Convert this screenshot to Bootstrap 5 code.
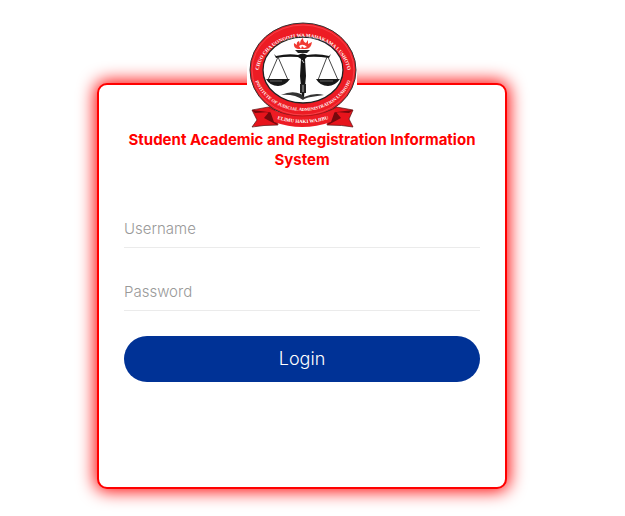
<!DOCTYPE html>
<html lang="en">
<head>
<meta charset="utf-8">
<meta name="viewport" content="width=device-width, initial-scale=1">
<title>Student Academic and Registration Information System</title>
<link href="https://cdn.jsdelivr.net/npm/bootstrap@5.3.0/dist/css/bootstrap.min.css" rel="stylesheet">
<style>
body { font-family: Inter, "Open Sans", sans-serif; background: #fff; }
.login-page { padding: 83px 118px 27px 97px; }
.login-card { border: 2px solid red; border-radius: 10px; box-shadow: 0 0 17px 2px red; padding: 0 25px 105px; }
.crest { width: 110px; height: 108px; margin-top: -64px; background: #fff; }
.crest text { font-family: "Liberation Serif", serif; font-weight: bold; fill: #fff; }
.system-title { color: red; font-size: 15px; line-height: 20px; font-weight: 700; margin: 1px 0 40px; }
.line-input { font-size: 15px; line-height: 21px; font-weight: 300; border: 0; border-bottom: 1px solid #ebebeb; border-radius: 0; padding: 8px 0; background: transparent; }
.line-input::placeholder { color: #999; }
.line-input:focus { box-shadow: none; border-color: #003399; }
.field-gap { margin-top: 25px; }
.login-btn { background: #003296; color: #fff; font-size: 18px; line-height: 26px; font-weight: 300; padding: 10px; border: 0; }
.login-btn:hover { background: #002878; color: #fff; }
</style>
</head>
<body>
<main class="login-page">
  <form class="login-card card bg-white">
    <svg class="crest d-block mx-auto flex-shrink-0" viewBox="0 0 110 108" role="img" aria-label="Institute of Judicial Administration Lushoto">
      <defs>
        <path id="arcTop" d="M11 55 A45 39 0 1 1 101 55"/>
        <path id="arcBottom" d="M6 47 A50 43 0 0 0 106 47"/>
        <path id="arcRibbon" d="M22 95 Q56 109 90 95"/>
      </defs>
      <path d="M5 89 L27 85 L31 104 Q16 104 5 106 L10 99 Z M106 89 L84 85 L80 104 Q96 104 106 106 L102 98 Z" fill="#e7141c" stroke="#511" stroke-width=".7"/>
      <path d="M5 89 L8 92 L22 91 L17 97 L30 104 L29 92 Z M106 89 L102 92 L89 91 L94 97 L81 104 L82 92 Z" fill="#77090d"/>
      <ellipse cx="56" cy="49" rx="53" ry="47" fill="#ed1c24" stroke="#333" stroke-width="1"/>
      <ellipse cx="56" cy="49" rx="51" ry="45" fill="none" stroke="#ff6b70" stroke-width=".5"/>
      <ellipse cx="56" cy="49" rx="40" ry="33" fill="#fff" stroke="#222" stroke-width="1.300"/>
      <path d="M22 87 Q55 103 89 87 L84 101 Q55 111 27 101 Z" fill="#ed1c24"/>
      <path d="M22 87 Q55 103 89 87" fill="none" stroke="#911" stroke-width=".6"/>
      <text font-size="5"><textPath href="#arcTop" startOffset="50%" text-anchor="middle">CHUO CHA UONGOZI WA MAHAKAMA LUSHOTO</textPath></text>
      <text font-size="4.500"><textPath href="#arcBottom" startOffset="50%" text-anchor="middle">INSTITUTE OF JUDICIAL ADMINISTRATION LUSHOTO</textPath></text>
      <text font-size="5"><textPath href="#arcRibbon" startOffset="50%" text-anchor="middle">ELIMU HAKI WAJIBU</textPath></text>
      <path d="M51 28 Q46 27 47 22 L50 24 Q49 21 52 20 L53 23 Q53 19 56 17 Q56 21 59 22 L61 19 L61 23 L65 21 Q64 28 59 28 Z" fill="#f13a32"/>
      <path d="M52 25 Q56 22 60 26 L57 27 L55 25 L54 28 Z" fill="#fff"/>
      <path d="M48 29 H63 L60 32 H51 Z" fill="#222"/>
      <path d="M27 33 L29 35 Q42 32 51 34 Q56 31 60 34 Q71 32 82 35 L84 33 L82 37 Q70 35 60 36 L58 38 L59 55 L57 76 H55 L53 55 L54 38 L51 36 Q40 35 29 37 Z" fill="#151515"/>
      <path d="M31 36 L21 59 M31 36 L41 59 M80 36 L71 59 M81 36 L91 59" stroke="#333" stroke-width=".9" fill="none"/>
      <path d="M19 58 H43 Q38 65 31 65 Q23 65 19 58 M69 58 H93 Q88 65 81 65 Q73 65 69 58" fill="#181818"/>
      <path d="M23 60 H35 M73 60 H86" stroke="#999" stroke-width=".6"/>
      <path d="M55 63 L57 65 L55 68 M55 39 L57 42" stroke="#fff" stroke-width=".8" fill="none"/>
      <path d="M53 63 H59 V72 H53 Z" fill="#222"/>
      <path d="M56 64 V71" stroke="#ccc" stroke-width=".8"/>
      <path d="M34 74 Q45 69 54 73 L57 76 Q68 71 77 74 L64 76 Q58 77 56 79 Q48 73 34 74" fill="#333"/>
    </svg>
    <h1 class="system-title text-center">Student Academic and Registration Information System</h1>
    <label class="visually-hidden" for="username">Username</label>
    <input class="form-control line-input" type="text" id="username" placeholder="Username" autocomplete="username">
    <label class="visually-hidden" for="password">Password</label>
    <input class="form-control line-input field-gap" type="password" id="password" placeholder="Password" autocomplete="current-password">
    <button class="btn login-btn rounded-pill w-100 field-gap" type="submit">Login</button>
  </form>
</main>
<script src="https://cdn.jsdelivr.net/npm/bootstrap@5.3.0/dist/js/bootstrap.bundle.min.js"></script>
</body>
</html>
